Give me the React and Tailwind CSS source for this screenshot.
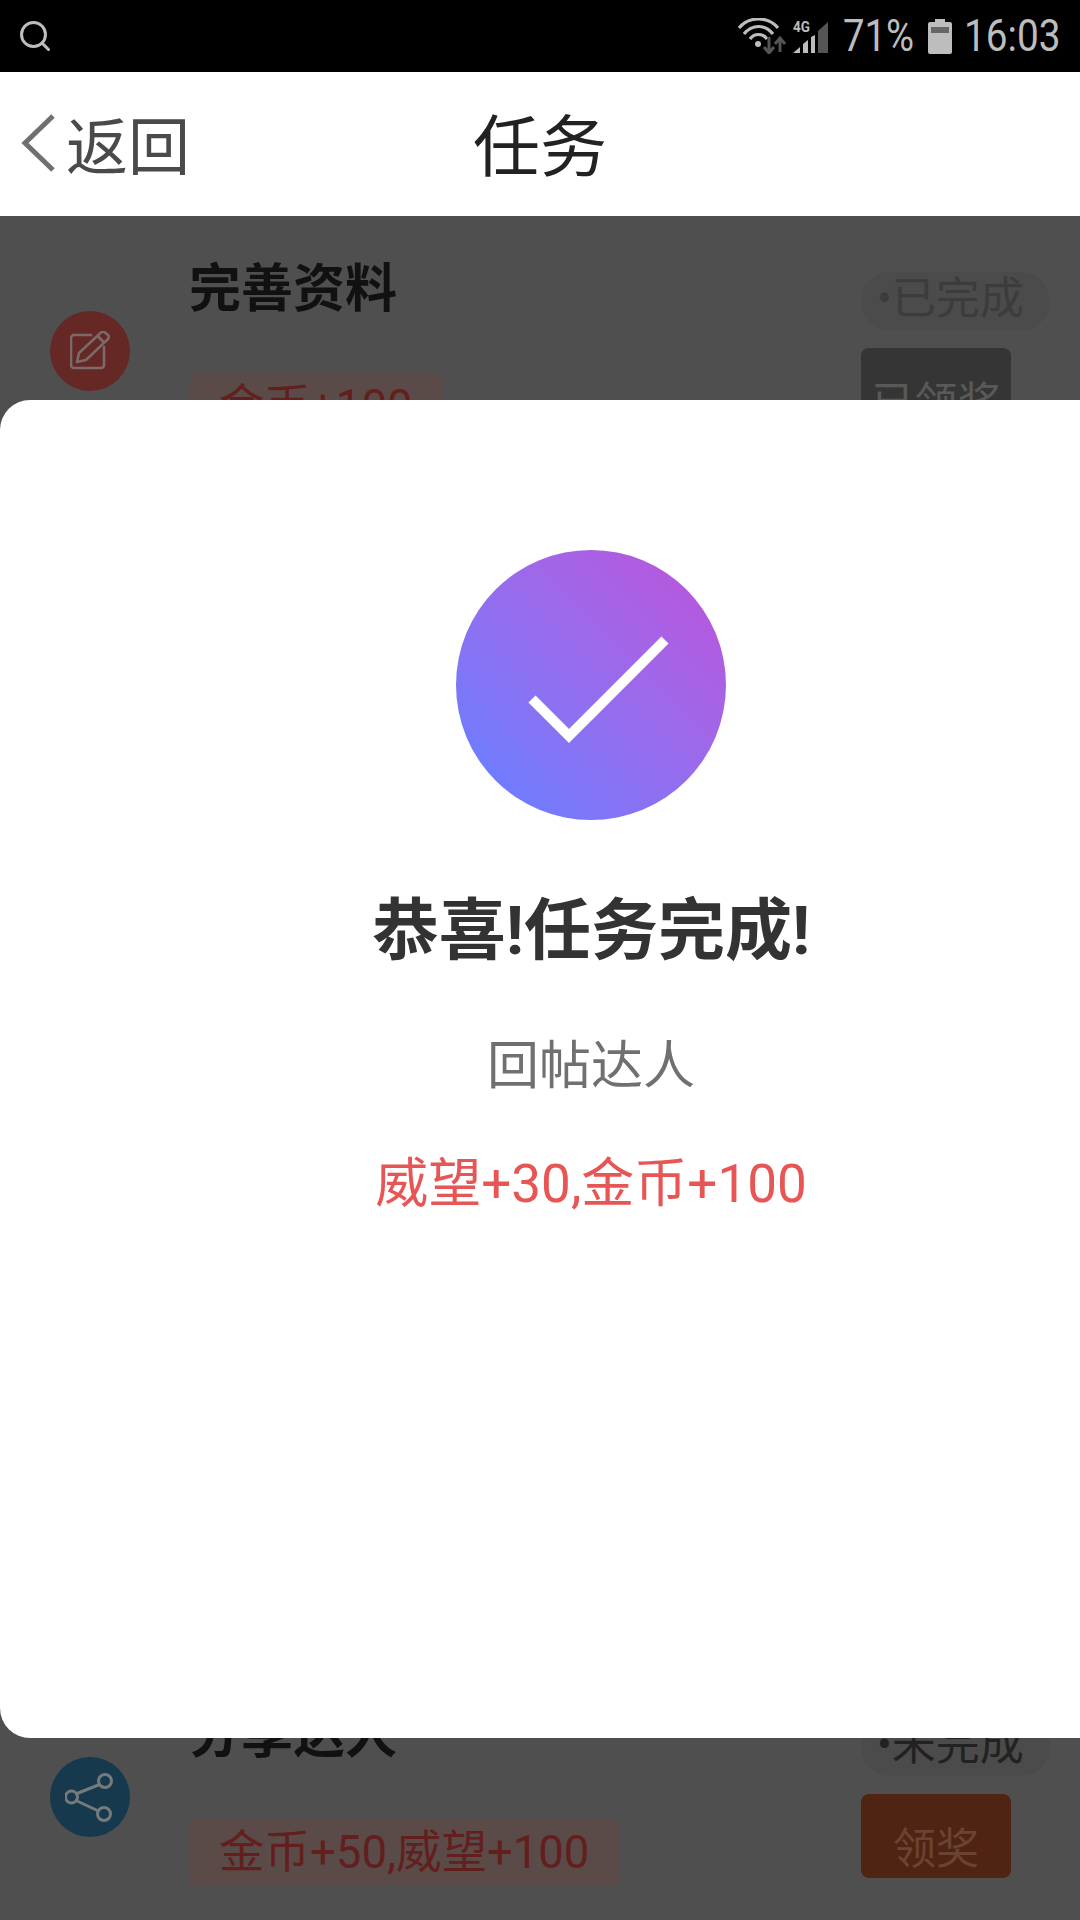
import { Search } from 'lucide-react'

const cjk = '"Roboto", "Noto Sans CJK SC", sans-serif'

function EditIcon() {
  return (
    <svg viewBox="0 0 40 40" className="w-10 h-10" fill="none" stroke="#7b6a69" strokeWidth="2.6" strokeLinejoin="round">
      <path d="M22 4H4a3 3 0 0 0-3 3v27a3 3 0 0 0 3 3h27a3 3 0 0 0 3-3V15" />
      <path d="M7 31L9 22L31 1.5Q33 0 35 1.5L38 4Q39.5 6 38 8L16 29Z" />
      <path d="M27.5 5L34.5 12" />
    </svg>
  )
}

function ShareIcon() {
  return (
    <svg viewBox="0 0 50 50" className="w-[50px] h-[50px]" fill="none" stroke="#757a7c" strokeWidth="3">
      <circle cx="40" cy="9" r="6.5" />
      <circle cx="6.5" cy="25" r="6" />
      <circle cx="39" cy="42" r="6.5" />
      <path d="M12 21.5L34.5 12.5M12 29L33.5 39" />
    </svg>
  )
}

function WifiIcon() {
  return (
    <svg viewBox="0 0 48 36" className="w-12 h-9" fill="none">
      <path d="M1 10C11 -2 30 -2 40 10" stroke="#bdbdbd" strokeWidth="3.2" />
      <path d="M6 16C14 6 27 6 35 16" stroke="#bdbdbd" strokeWidth="3.2" />
      <path d="M12 21C16 15 25 15 29 21" stroke="#bdbdbd" strokeWidth="3.2" />
      <circle cx="20" cy="26" r="3" fill="#bdbdbd" />
      <path d="M31 19v15M26 29l5 6 5-6" stroke="#555" strokeWidth="3" />
      <path d="M42 34V21M37 26l5-6 5 6" stroke="#555" strokeWidth="3" />
    </svg>
  )
}

function SignalIcon() {
  return (
    <div className="relative w-[35px] h-[31px] mt-[3px]">
      <span className="absolute left-0 -top-[3px] text-[15px] leading-[17px] font-bold text-[#bdbdbd] scale-x-[0.9] origin-left">4G</span>
      <svg viewBox="0 0 35 31" className="w-[35px] h-[31px]">
        <path d="M0 31L7 25V31ZM10 31V22L15 18V31ZM18 31V15L22 13V31Z" fill="#bdbdbd" />
        <path d="M25 31V9L35 0V31Z" fill="#555" />
      </svg>
    </div>
  )
}

function TaskRow({ title, icon, iconBg, status, statusColor, tag, action, actionBg, actionColor }) {
  return (
    <div className="h-[241px] flex pt-[40px]">
      <div className="w-[189px] shrink-0 pl-[50px] pt-[55px]">
        <div className={`w-20 h-20 rounded-full flex items-center justify-center ${iconBg}`}>{icon}</div>
      </div>
      <div className="flex-1">
        <p className="text-[52px] leading-[68px] font-bold text-[#111]">{title}</p>
        <span className="inline-block mt-[50px] h-[66px] px-[30px] rounded-md bg-[#5a4b49] text-[#621f1d] text-[45.5px] leading-[66px]">{tag}</span>
      </div>
      <div className="w-[219px] shrink-0 flex flex-col items-start pt-[16px]">
        <span className="h-[58px] w-[189px] pl-[16px] rounded-[29px] bg-[#4b4b4b] text-[44px] leading-[54px] whitespace-nowrap" style={{ color: statusColor }}>
          •{status}
        </span>
        <span className={`mt-[18px] w-[150px] h-[84px] pt-[13px] rounded-lg text-[43px] leading-[84px] text-center ${actionBg} ${actionColor}`}>{action}</span>
      </div>
    </div>
  )
}

export default function App() {
  return (
    <div className="relative w-[1080px] h-[1920px] overflow-hidden bg-[#4f4f4f]" style={{ fontFamily: cjk }}>
      <div className="h-[72px] bg-black flex items-center justify-between pl-[17px] pr-[20px]">
        <Search className="w-[36px] h-[36px] text-[#bdbdbd]" strokeWidth={2} />
        <div className="flex items-center">
          <WifiIcon />
          <div className="ml-[7px]"><SignalIcon /></div>
          <span className="ml-[15px] w-[72px] text-[44px] leading-none text-[#bdbdbd] scale-x-[0.87] origin-left whitespace-nowrap">71%</span>
          <svg viewBox="0 0 24 35" className="w-6 h-[35px] ml-[13px]">
            <path d="M7 0h10v3h5a2 2 0 0 1 2 2v28a2 2 0 0 1-2 2H2a2 2 0 0 1-2-2V5a2 2 0 0 1 2-2h5z" fill="#bdbdbd" />
            <rect x="3" y="8" width="18" height="6" fill="#666" />
          </svg>
          <span className="ml-[12px] w-[96px] text-[44px] leading-none text-[#bdbdbd] scale-x-[0.88] origin-left whitespace-nowrap">16:03</span>
        </div>
      </div>

      <div className="h-[144px] bg-white relative flex items-center justify-center">
        <div className="absolute left-[20px] top-0 h-full flex items-center">
          <svg viewBox="0 0 36 60" className="w-9 h-[60px] -mt-[2px]" fill="none" stroke="#707070" strokeWidth="5">
            <path d="M33 3L5 30L33 57" />
          </svg>
          <span className="text-[62px] text-[#4a4a4a] leading-none ml-[10px] mt-[9px]">返回</span>
        </div>
        <span className="text-[67px] text-[#222] leading-none mt-[8px]">任务</span>
      </div>

      <TaskRow
        title="完善资料"
        icon={<EditIcon />}
        iconBg="bg-[#652825]"
        status="已完成"
        statusColor="#3c3c3c"
        tag="金币+100"
        action="已领奖"
        actionBg="bg-[#353535]"
        actionColor="text-[#595959]"
      />
      <div className="h-[1205px]" />
      <TaskRow
        title="分享达人"
        icon={<ShareIcon />}
        iconBg="bg-[#17394d]"
        status="未完成"
        statusColor="#222222"
        tag="金币+50,威望+100"
        action="领奖"
        actionBg="bg-[#4f2412]"
        actionColor="text-[#6a4333]"
      />

      <div className="absolute left-0 top-[400px] w-[1182px] h-[1338px] bg-white rounded-[30px] flex flex-col items-center pt-[150px]">
        <div className="w-[270px] h-[270px] rounded-full bg-gradient-to-tr from-[#6a7dff] from-10% to-[#b657dd] to-90%">
          <svg viewBox="0 0 270 270" className="w-full h-full" fill="none">
            <path d="M76 149L113 186L209 90" stroke="#fff" strokeWidth="10" />
          </svg>
        </div>
        <p className="mt-[65px] text-[67px] leading-[92px] font-bold text-[#333]">恭喜!任务完成!</p>
        <p className="mt-[54px] text-[52px] leading-[72px] text-[#707070]">回帖达人</p>
        <p className="mt-[45px] text-[53px] leading-[72px] text-[#e85555]">威望+30,金币+100</p>
      </div>
    </div>
  )
}
